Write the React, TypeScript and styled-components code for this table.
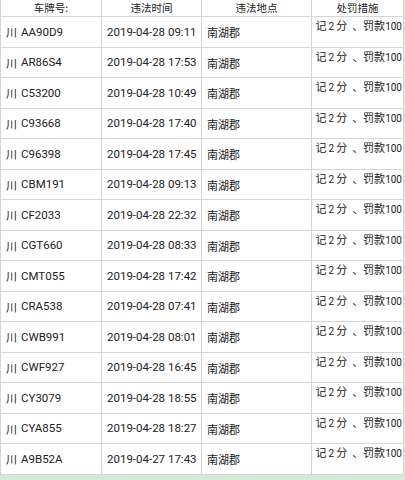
import React from "react";
import styled, { createGlobalStyle } from "styled-components";

const Global = createGlobalStyle`
  html, body { margin: 0; padding: 0; background: #d5e9d5; }
  body { font-family: "Noto Sans CJK SC", sans-serif; }
`;

const Sheet = styled.div`
  display: grid;
  grid-template-columns: 101px 100px 110px 92px;
  width: 404px;
  box-sizing: border-box;
  border-left: 1px solid #d6d6d6;
  background: #ffffff;
  color: #222222;
`;

const HeadCell = styled.div`
  box-sizing: border-box;
  height: 17px;
  border-right: 1px solid #d6d6d6;
  border-bottom: 1px solid #d6d6d6;
  display: flex;
  align-items: center;
  justify-content: center;
  font-size: 10.5px;
  line-height: 1;
`;

const Cell = styled.div<{ $h: number }>`
  box-sizing: border-box;
  height: ${(p) => p.$h}px;
  border-right: 1px solid #d6d6d6;
  border-bottom: 1px solid #d6d6d6;
  display: flex;
  align-items: center;
  padding: 1px 0 0 5px;
  font-family: Roboto, "Noto Sans CJK SC", sans-serif;
  font-size: 11.5px;
  line-height: 1;
  white-space: pre;
`;

const PenaltyCell = styled.div<{ $h: number }>`
  box-sizing: border-box;
  height: ${(p) => p.$h}px;
  border-right: 1px solid #d6d6d6;
  border-bottom: 1px solid #d6d6d6;
  padding: 2px 1px 0 0;
  text-align: right;
  font-family: Roboto, "Noto Sans CJK SC", sans-serif;
  font-size: 10px;
  line-height: 13px;
  white-space: pre;
`;

const Han = styled.span<{ $gap?: number }>`
  font-family: "Noto Sans CJK SC", sans-serif;
  font-size: 11px;
  margin-right: ${(p) => p.$gap ?? 0}px;
`;

const Num = styled.span<{ $gap?: number }>`
  font-size: 10px;
  margin-right: ${(p) => p.$gap ?? 0}px;
`;

const rows: [string, string][] = [
  ["AA90D9", "2019-04-28 09:11"],
  ["AR86S4", "2019-04-28 17:53"],
  ["C53200", "2019-04-28 10:49"],
  ["C93668", "2019-04-28 17:40"],
  ["C96398", "2019-04-28 17:45"],
  ["CBM191", "2019-04-28 09:13"],
  ["CF2033", "2019-04-28 22:32"],
  ["CGT660", "2019-04-28 08:33"],
  ["CMT055", "2019-04-28 17:42"],
  ["CRA538", "2019-04-28 07:41"],
  ["CWB991", "2019-04-28 08:01"],
  ["CWF927", "2019-04-28 16:45"],
  ["CY3079", "2019-04-28 18:55"],
  ["CYA855", "2019-04-28 18:27"],
  ["A9B52A", "2019-04-27 17:43"],
];

export default function App() {
  return (
    <>
      <Global />
      <Sheet>
        <HeadCell>车牌号:</HeadCell>
        <HeadCell>违法时间</HeadCell>
        <HeadCell>违法地点</HeadCell>
        <HeadCell>处罚措施</HeadCell>
        {rows.map(([plate, time], i) => {
          const h = i % 2 === 0 ? 31 : 30;
          return (
            <React.Fragment key={plate}>
              <Cell $h={h}>
                <Han $gap={4}>川</Han>
                {plate}
              </Cell>
              <Cell $h={h}>{time}</Cell>
              <Cell $h={h}>
                <Han>南湖郡</Han>
              </Cell>
              <PenaltyCell $h={h}>
                <Han $gap={2}>记</Han>
                <Num $gap={2}>2</Num>
                <Han $gap={5}>分</Han>
                <Han>、罚款</Han>
                <Num>100</Num>
              </PenaltyCell>
            </React.Fragment>
          );
        })}
      </Sheet>
    </>
  );
}
